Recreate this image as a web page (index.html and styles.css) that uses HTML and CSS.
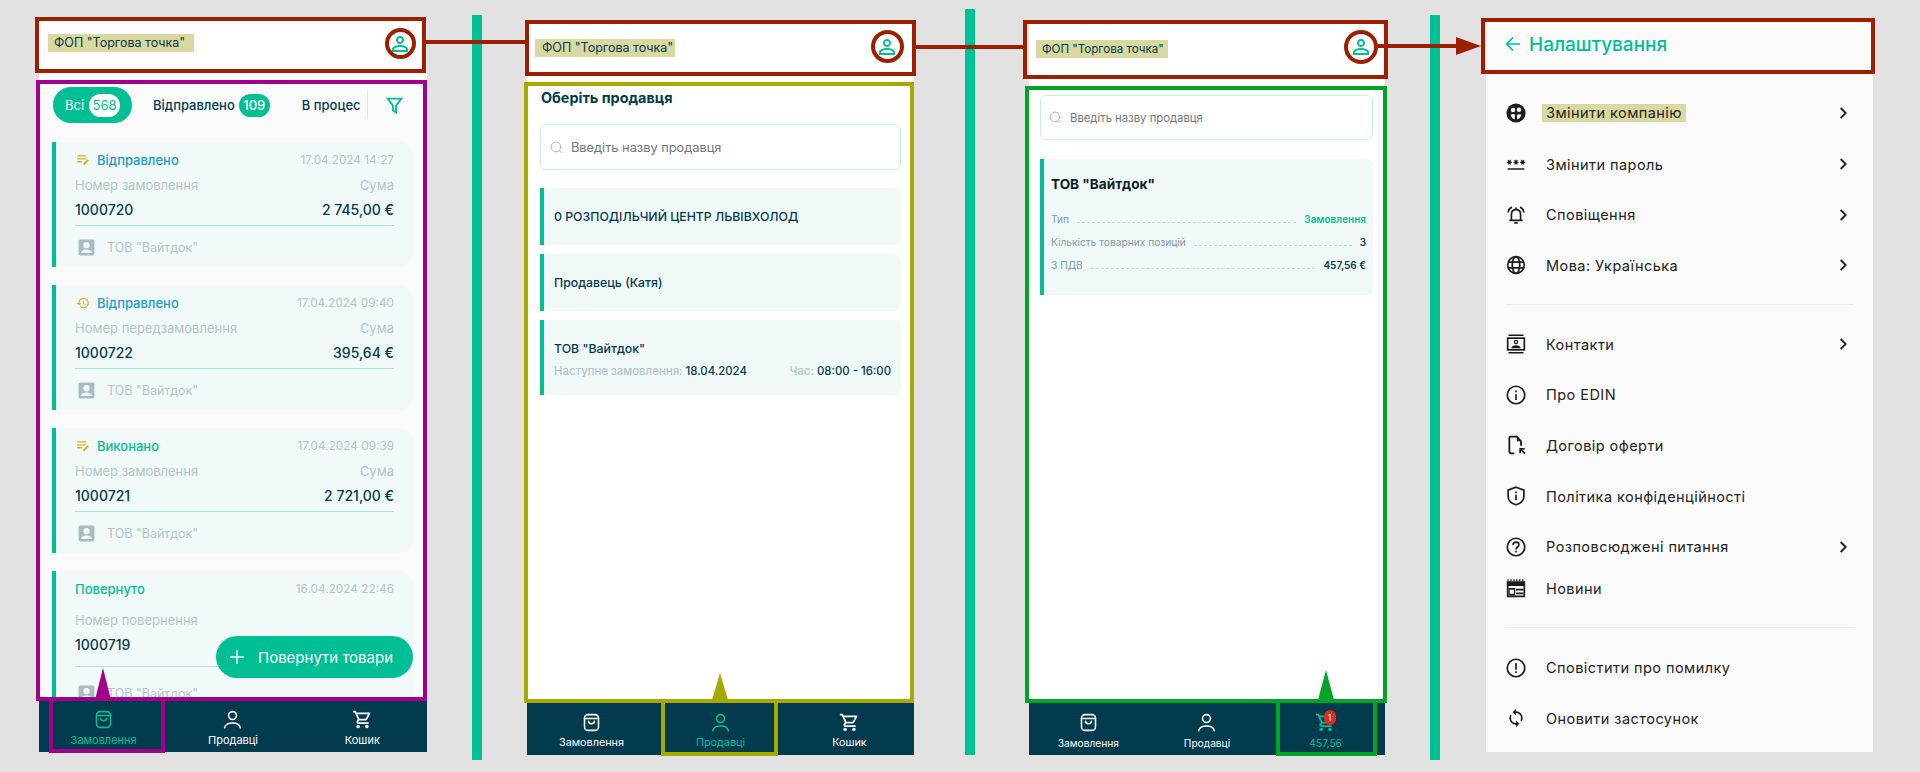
FILE: index.html
```html
<!DOCTYPE html>
<html lang="en">
<head>
    <meta charset="UTF-8">
    <meta name="viewport" content="width=device-width, initial-scale=1.0">
    <title>EDIN screens</title>
    <link rel="stylesheet" href="styles.css">
</head>
<body>
    <svg class="sprite" width="0" height="0">
        <symbol id="i-user" viewBox="0 0 24 24"><path d="M12 5.9a2.1 2.1 0 1 1 0 4.2 2.1 2.1 0 0 1 0-4.2m0 9c2.97 0 6.1 1.46 6.1 2.1v1.1H5.9V17c0-.64 3.13-2.1 6.1-2.1M12 4C9.79 4 8 5.79 8 8s1.79 4 4 4 4-1.79 4-4-1.79-4-4-4zm0 9c-2.67 0-8 1.34-8 4v3h16v-3c0-2.66-5.33-4-8-4z" fill="currentColor"/></symbol>
        <symbol id="i-bag" viewBox="0 0 24 24"><g fill="none" stroke="currentColor" stroke-width="1.8"><rect x="4" y="3" width="16" height="18" rx="4"/><path d="M4 7.5h16M8.5 10.5c.5 4 6.5 4 7 0" stroke-linecap="round"/></g></symbol>
        <symbol id="i-person" viewBox="0 0 24 24"><g fill="none" stroke="currentColor" stroke-width="1.8" stroke-linecap="round"><circle cx="12" cy="7.5" r="4.5"/><path d="M3 21.5c1-4 4.5-5.5 9-5.5s8 1.500 9 5.500"/></g></symbol>
        <symbol id="i-cart" viewBox="0 0 24 24"><path d="M15.55 13c.75 0 1.41-.41 1.75-1.03l3.58-6.49A.996.996 0 0 0 20.01 4H5.21l-.94-2H1v2h2l3.6 7.59-1.35 2.44C4.52 15.37 5.48 17 7 17h12v-2H7l1.1-2h7.45zM6.16 6h12.15l-2.76 5H8.53L6.16 6zM7 18c-1.1 0-1.99.9-1.99 2S5.9 22 7 22s2-.9 2-2-.9-2-2-2zm10 0c-1.1 0-1.99.9-1.99 2s.89 2 1.99 2 2-.9 2-2-.9-2-2-2z" fill="currentColor"/></symbol>
        <symbol id="i-notes" viewBox="0 0 24 24"><g fill="none" stroke="currentColor" stroke-width="2.200"><path d="M2 5h15M2 10h15M2 15h8"/><path d="M13 20l8-8" stroke-width="3.400"/></g></symbol>
        <symbol id="i-history" viewBox="0 0 24 24"><path d="M13 3a9 9 0 0 0-9 9H1l3.890 3.890.07.140L9 12H6c0-3.870 3.130-7 7-7s7 3.130 7 7-3.130 7-7 7c-1.930 0-3.680-.79-4.940-2.060l-1.420 1.420A8.954 8.954 0 0 0 13 21a9 9 0 0 0 0-18zm-1 5v5l4.280 2.540.72-1.210-3.500-2.080V8H12z" fill="currentColor"/></symbol>
        <symbol id="i-account" viewBox="0 0 24 24"><rect x="2" y="2" width="20" height="20" rx="2" fill="currentColor"/><circle cx="12" cy="9" r="4" fill="#f2faf9"/><path d="M5 19c.5-3.500 4-4.500 7-4.500s6.500 1 7 4.500z" fill="#f2faf9"/></symbol>
        <symbol id="i-search" viewBox="0 0 24 24"><g fill="none" stroke="currentColor" stroke-width="1.800" stroke-linecap="round"><circle cx="11" cy="11" r="9"/><path d="M17.500 18l3.500 3.500"/></g></symbol>
        <symbol id="i-chevron" viewBox="0 0 24 24"><path d="M8.500 4.500l7.500 7.500-7.500 7.500" fill="none" stroke="currentColor" stroke-width="2.800"/></symbol>
        <symbol id="i-company" viewBox="0 0 24 24"><circle cx="12" cy="12" r="11.500" fill="currentColor"/><circle cx="8.500" cy="8.500" r="2.700" fill="#fafafa"/><circle cx="15.500" cy="8" r="2.700" fill="#fafafa"/><path d="M5.500 14c1.800-1 4-1 5.500 0l-.5 5.500C8 19 6 17 5.500 14zM13 14.500c1.500-1.200 3.800-1.200 5.500-.5-.5 2.500-2.500 5-5 5.500z" fill="#fafafa"/></symbol>
        <symbol id="i-password" viewBox="0 0 24 24"><path d="M2 17h20v2H2v-2zm1.150-4.050L4 11.470l.85 1.480 1.300-.75-.85-1.480H7v-1.500H5.300l.85-1.470L4.850 7 4 8.470 3.150 7l-1.300.75.85 1.470H1v1.500h1.700l-.85 1.480 1.300.75zm6.700-.75 1.300.75.85-1.480.85 1.480 1.300-.75-.85-1.480H15v-1.500h-1.700l.85-1.470-1.300-.75L12 8.470 11.150 7l-1.300.75.85 1.470H9v1.500h1.700l-.85 1.480zM23 9.220h-1.700l.85-1.470-1.300-.75L20 8.470 19.150 7l-1.300.75.85 1.470H17v1.500h1.700l-.85 1.480 1.300.75.85-1.480.85 1.480 1.300-.75-.85-1.480H23v-1.500z" fill="currentColor"/></symbol>
        <symbol id="i-bell" viewBox="0 0 24 24"><g fill="none" stroke="currentColor" stroke-width="2"><path d="M6.500 18v-6.500c0-3.500 2.200-6 5.500-6s5.500 2.500 5.500 6V18M4 18.500h16"/><path d="M7 2.500C4.500 4 2.800 6.500 2.500 9M17 2.500c2.500 1.500 4.200 4 4.500 6.500"/><path d="M10 21.500h4M12 3v2"/></g></symbol>
        <symbol id="i-globe" viewBox="0 0 24 24"><g fill="none" stroke="currentColor" stroke-width="2"><circle cx="12" cy="12" r="10"/><ellipse cx="12" cy="12" rx="4.500" ry="10"/><path d="M2.500 8.500h19M2.500 15.500h19"/></g></symbol>
        <symbol id="i-contacts" viewBox="0 0 24 24"><g fill="none" stroke="currentColor" stroke-width="2"><path d="M3 1.500h18M3 22.500h18"/><rect x="2" y="5" width="20" height="14"/></g><circle cx="12" cy="9.500" r="2" fill="none" stroke="currentColor" stroke-width="1.500"/><path d="M6.500 17c0-2.500 3-3.500 5.500-3.500s5.500 1 5.500 3.500z" fill="currentColor"/></symbol>
        <symbol id="i-info" viewBox="0 0 24 24"><circle cx="12" cy="12" r="10.500" fill="none" stroke="currentColor" stroke-width="2"/><path d="M11 11h2v7h-2zM11 6.500h2v2.200h-2z" fill="currentColor"/></symbol>
        <symbol id="i-doc" viewBox="0 0 24 24"><path d="M10 22H6.500C5 22 4 21 4 19.500V3.500C4 2.500 4.500 2 5.500 2H13l5 5.500V13" fill="none" stroke="currentColor" stroke-width="2.200"/><path d="M13 2v5.500h5z" fill="currentColor"/><path d="M16 15.500h6.500v2h-3l4 4-1.500 1.500-4-4v3h-2z" fill="currentColor"/></symbol>
        <symbol id="i-shield" viewBox="0 0 24 24"><path d="M12 1.500l9.500 3.500v7c0 5-3.500 9-9.500 10.500C6 21 2.500 17 2.500 12V5z" fill="none" stroke="currentColor" stroke-width="2"/><path d="M11 10.500h2v6.500h-2zM11 6.500h2v2.200h-2z" fill="currentColor"/></symbol>
        <symbol id="i-help" viewBox="0 0 24 24"><circle cx="12" cy="12" r="10.500" fill="none" stroke="currentColor" stroke-width="2"/><path d="M8.500 9.500c0-2 1.500-3.300 3.500-3.300s3.500 1.300 3.500 3c0 2.800-3.500 2.800-3.500 5.800" fill="none" stroke="currentColor" stroke-width="2"/><path d="M11 16.500h2v2.200h-2z" fill="currentColor"/></symbol>
        <symbol id="i-news" viewBox="0 0 24 24"><path d="M2 5h20v17H2z" fill="none" stroke="currentColor" stroke-width="2"/><path d="M2 5h20v4.500H2zM12 13h9v2h-9zM3 12h8v9H3zM12 17.500h9v2h-9z" fill="currentColor"/><path d="M2.500 1.500v2.500M6 1.500v2.500M9.500 1.500v2.500M13 1.500v2.500M16.500 1.500v2.500M20 1.500v2.500" stroke="currentColor" stroke-width="1.500"/><path d="M4.500 14h5v5h-5z" fill="#fafafa"/></symbol>
        <symbol id="i-alert" viewBox="0 0 24 24"><circle cx="12" cy="12" r="10.500" fill="none" stroke="currentColor" stroke-width="2"/><path d="M11 6h2v8h-2zM11 15.800h2V18h-2z" fill="currentColor"/></symbol>
        <symbol id="i-sync" viewBox="0 0 24 24"><path d="M12 4V1L8 5l4 4V6c3.310 0 6 2.690 6 6 0 1.010-.25 1.970-.7 2.800l1.460 1.460C19.540 15.030 20 13.570 20 12c0-4.420-3.580-8-8-8zm0 14c-3.310 0-6-2.690-6-6 0-1.010.25-1.970.7-2.800L5.240 7.740C4.460 8.970 4 10.430 4 12c0 4.420 3.580 8 8 8v3l4-4-4-4v3z" fill="currentColor"/></symbol>
    </svg>

    <div class="board">
        <!-- orders -->
        <section class="screen screen-orders">
            <header class="top-bar">
                <span class="company">ФОП "Торгова точка"</span>
                <svg class="avatar"><use href="#i-user"/></svg>
            </header>
            <div class="content orders">
                <div class="tabs">
                    <div class="tab-scroll">
                        <div class="tab tab-active">Всі <span class="count">568</span></div>
                        <div class="tab">Відправлено <span class="count count-green">109</span></div>
                        <div class="tab tab-last">В процес</div>
                    </div>
                    <span class="tab-sep"></span>
                    <svg class="filter" viewBox="0 0 16 16"><path d="M1.500 1.500h13L9.500 8v6.500l-3-2V8z" fill="none" stroke="currentColor" stroke-width="1.800"/></svg>
                </div>
                <div class="order-list">
                    <article class="order">
                        <div class="order-row order-head">
                            <span class="order-state blue"><svg class="state-icon"><use href="#i-notes"/></svg>Відправлено</span>
                            <span class="muted order-date">17.04.2024 14:27</span>
                        </div>
                        <div class="order-row order-label muted"><span>Номер замовлення</span><span>Сума</span></div>
                        <div class="order-row order-value"><span>1000720</span><span>2 745,00 €</span></div>
                        <div class="order-owner muted"><svg class="owner-icon"><use href="#i-account"/></svg>ТОВ "Вайтдок"</div>
                    </article>
                    <article class="order">
                        <div class="order-row order-head">
                            <span class="order-state blue"><svg class="state-icon"><use href="#i-history"/></svg>Відправлено</span>
                            <span class="muted order-date">17.04.2024 09:40</span>
                        </div>
                        <div class="order-row order-label muted"><span>Номер передзамовлення</span><span>Сума</span></div>
                        <div class="order-row order-value"><span>1000722</span><span>395,64 €</span></div>
                        <div class="order-owner muted"><svg class="owner-icon"><use href="#i-account"/></svg>ТОВ "Вайтдок"</div>
                    </article>
                    <article class="order">
                        <div class="order-row order-head">
                            <span class="order-state green"><svg class="state-icon"><use href="#i-notes"/></svg>Виконано</span>
                            <span class="muted order-date">17.04.2024 09:39</span>
                        </div>
                        <div class="order-row order-label muted"><span>Номер замовлення</span><span>Сума</span></div>
                        <div class="order-row order-value"><span>1000721</span><span>2 721,00 €</span></div>
                        <div class="order-owner muted"><svg class="owner-icon"><use href="#i-account"/></svg>ТОВ "Вайтдок"</div>
                    </article>
                    <article class="order order-return">
                        <div class="order-row order-head">
                            <span class="order-state green">Повернуто</span>
                            <span class="muted order-date">16.04.2024 22:46</span>
                        </div>
                        <div class="order-row order-label muted"><span>Номер повернення</span></div>
                        <div class="order-row order-value"><span>1000719</span></div>
                        <div class="order-owner muted"><svg class="owner-icon"><use href="#i-account"/></svg>ТОВ "Вайтдок"</div>
                    </article>
                </div>
                <button class="return-btn">
                    <svg viewBox="0 0 14 14"><path d="M7 0v14M0 7h14" stroke="currentColor" stroke-width="1.500"/></svg>
                    Повернути товари
                </button>
            </div>
            <nav class="tabbar">
                <div class="nav-item nav-active"><svg><use href="#i-bag"/></svg>Замовлення</div>
                <div class="nav-item"><svg><use href="#i-person"/></svg>Продавці</div>
                <div class="nav-item"><svg><use href="#i-cart"/></svg>Кошик</div>
            </nav>
        </section>

        <div class="divider divider-a"></div>

        <!-- sellers -->
        <section class="screen screen-sellers">
            <header class="top-bar">
                <span class="company">ФОП "Торгова точка"</span>
                <svg class="avatar"><use href="#i-user"/></svg>
            </header>
            <div class="content sellers">
                <h2 class="sellers-title">Оберіть продавця</h2>
                <div class="search">
                    <svg><use href="#i-search"/></svg>
                    <span>Введіть назву продавця</span>
                </div>
                <div class="seller-list">
                    <div class="seller">0 РОЗПОДІЛЬЧИЙ ЦЕНТР ЛЬВІВХОЛОД</div>
                    <div class="seller">Продавець (Катя)</div>
                    <div class="seller seller-next">
                        <div>ТОВ "Вайтдок"</div>
                        <div class="seller-meta">
                            <span><span class="muted">Наступне замовлення:</span> 18.04.2024</span>
                            <span><span class="muted">Час:</span> 08:00 - 16:00</span>
                        </div>
                    </div>
                </div>
            </div>
            <nav class="tabbar">
                <div class="nav-item"><svg><use href="#i-bag"/></svg>Замовлення</div>
                <div class="nav-item nav-active"><svg><use href="#i-person"/></svg>Продавці</div>
                <div class="nav-item"><svg><use href="#i-cart"/></svg>Кошик</div>
            </nav>
        </section>

        <div class="divider divider-b"></div>

        <!-- cart -->
        <section class="screen screen-cart">
            <header class="top-bar">
                <span class="company">ФОП "Торгова точка"</span>
                <svg class="avatar"><use href="#i-user"/></svg>
            </header>
            <div class="content cart">
                <div class="search">
                    <svg><use href="#i-search"/></svg>
                    <span>Введіть назву продавця</span>
                </div>
                <div class="cart-card">
                    <div class="cart-title">ТОВ "Вайтдок"</div>
                    <div class="cart-row"><span>Тип</span><i></i><b class="green">Замовлення</b></div>
                    <div class="cart-row"><span>Кількість товарних позицій</span><i></i><b>3</b></div>
                    <div class="cart-row"><span>З ПДВ</span><i></i><b>457,56 €</b></div>
                </div>
            </div>
            <nav class="tabbar">
                <div class="nav-item"><svg><use href="#i-bag"/></svg>Замовлення</div>
                <div class="nav-item"><svg><use href="#i-person"/></svg>Продавці</div>
                <div class="nav-item nav-active">
                    <svg><use href="#i-cart"/></svg>457,56
                    <span class="nav-badge">1</span>
                </div>
            </nav>
        </section>

        <div class="divider divider-a"></div>

        <!-- settings -->
        <section class="screen screen-settings">
            <header class="settings-head">
                <svg viewBox="0 0 16 16"><path d="M15 8H2M8 1.500L1.500 8 8 14.500" fill="none" stroke="currentColor" stroke-width="1.600"/></svg>
                Налаштування
            </header>
            <ul class="menu menu-first">
                <li><svg class="menu-icon"><use href="#i-company"/></svg><span class="mark-text">Змінити компанію</span><svg class="chevron"><use href="#i-chevron"/></svg></li>
                <li><svg class="menu-icon"><use href="#i-password"/></svg><span>Змінити пароль</span><svg class="chevron"><use href="#i-chevron"/></svg></li>
                <li><svg class="menu-icon"><use href="#i-bell"/></svg><span>Сповіщення</span><svg class="chevron"><use href="#i-chevron"/></svg></li>
                <li><svg class="menu-icon"><use href="#i-globe"/></svg><span>Мова: Українська</span><svg class="chevron"><use href="#i-chevron"/></svg></li>
            </ul>
            <hr class="menu-line">
            <ul class="menu">
                <li><svg class="menu-icon"><use href="#i-contacts"/></svg><span>Контакти</span><svg class="chevron"><use href="#i-chevron"/></svg></li>
                <li><svg class="menu-icon"><use href="#i-info"/></svg><span>Про EDIN</span></li>
                <li><svg class="menu-icon"><use href="#i-doc"/></svg><span>Договір оферти</span></li>
                <li><svg class="menu-icon"><use href="#i-shield"/></svg><span>Політика конфіденційності</span></li>
                <li><svg class="menu-icon"><use href="#i-help"/></svg><span>Розповсюджені питання</span><svg class="chevron"><use href="#i-chevron"/></svg></li>
                <li class="menu-short"><svg class="menu-icon"><use href="#i-news"/></svg><span>Новини</span></li>
            </ul>
            <hr class="menu-line menu-line-low">
            <ul class="menu">
                <li><svg class="menu-icon"><use href="#i-alert"/></svg><span>Сповістити про помилку</span></li>
                <li><svg class="menu-icon"><use href="#i-sync"/></svg><span>Оновити застосунок</span></li>
            </ul>
        </section>

        <!-- red, purple, olive and green callouts drawn over the screens -->
        <svg class="callouts" viewBox="0 0 1920 772">
            <g class="c-red">
                <rect x="37" y="19" width="387" height="52"/>
                <circle cx="400.500" cy="43.500" r="13.500"/>
                <path d="M426 42h99"/>
                <rect x="527" y="22" width="387" height="52"/>
                <circle cx="887.500" cy="46.500" r="14.500"/>
                <path d="M916 47h107"/>
                <rect x="1025" y="22" width="361" height="55"/>
                <circle cx="1361" cy="47" r="15"/>
                <path d="M1378 46h80"/>
                <polygon points="1456,37 1481,46 1456,55"/>
                <rect x="1483" y="20" width="390" height="52"/>
            </g>
            <g class="c-purple">
                <rect x="38" y="82" width="387" height="617"/>
                <rect x="51" y="699" width="112" height="52"/>
                <polygon points="103,668 95,700 111,700"/>
            </g>
            <g class="c-olive">
                <rect x="526" y="84" width="386" height="617"/>
                <rect x="663" y="701" width="113" height="53"/>
                <polygon points="720,673 712,700 728,700"/>
            </g>
            <g class="c-green">
                <rect x="1027" y="88" width="358" height="613"/>
                <rect x="1278" y="701" width="97" height="53"/>
                <polygon points="1326,670 1318,700 1334,700"/>
            </g>
        </svg>
    </div>
</body>
</html>
```

FILE: styles.css
```css
html, body {
    margin: 0;
    padding: 0;
    background: #e2e2e2;
    font-family: Inter, "Noto Sans", sans-serif;
    color: #023a4e;
}

.sprite {
    position: absolute;
}

.board {
    position: relative;
    display: flex;
    align-items: flex-start;
    width: 1920px;
    height: 772px;
    padding-left: 39px;
    box-sizing: border-box;
    overflow: hidden;
}

.callouts {
    position: absolute;
    left: 0;
    top: 0;
    width: 1920px;
    height: 772px;
    pointer-events: none;
}

.callouts rect, .callouts circle, .callouts path {
    fill: none;
    stroke-width: 4;
}

.c-red rect, .c-red circle, .c-red path { stroke: #9c1f00; }
.c-red polygon { fill: #9c1f00; }
.c-purple rect { stroke: #a0008c; }
.c-purple polygon { fill: #a0008c; }
.c-olive rect { stroke: #a8a800; }
.c-olive polygon { fill: #a8a800; }
.c-green rect { stroke: #00a528; }
.c-green polygon { fill: #00a528; }

.divider {
    flex: none;
    width: 10px;
    background: #00c095;
}

.divider-a {
    height: 745px;
    margin: 15px 45px 0 45px;
}

.divider-b {
    height: 746px;
    margin: 9px 54px 0 51px;
}

.screen {
    flex: none;
    display: flex;
    flex-direction: column;
    height: 731px;
    background: #fff;
}

.screen-orders { width: 388px; margin-top: 21px; }
.screen-sellers { width: 387px; margin-top: 24px; }
.screen-cart { width: 356px; margin-top: 24px; }
.screen-settings { width: 387px; height: 730px; margin-top: 22px; margin-left: 1px; background: #fafafa; }

.top-bar {
    flex: none;
    display: flex;
    align-items: center;
    justify-content: space-between;
    height: 48px;
    padding: 0 15px 0 9px;
    background: #fff;
}

.company {
    padding: 1px 9px 1px 6px;
    margin-top: -4px;
    background: #d9d8a0;
    font-size: 12.500px;
    line-height: 16px;
    color: #023a4e;
}

.avatar {
    width: 24px;
    height: 24px;
    margin-top: -3px;
    color: #00bf95;
}

.screen-sellers .top-bar {
    padding-left: 8px;
}

.screen-sellers .company {
    padding: 1px 2px 1px 7px;
    margin-top: 0;
}

.screen-cart .top-bar {
    height: 51px;
    padding: 0 12px 0 7px;
}

.screen-cart .company {
    padding: 1px 4px 1px 6px;
    margin-top: -1px;
    font-size: 11.600px;
}

.screen-cart .avatar {
    margin-top: -5px;
}

.content {
    position: relative;
    flex: 1;
    min-height: 0;
    overflow: hidden;
}

/* orders */
.orders {
    padding: 18px 14px 0 13px;
    background: #fafafa;
}

.tabs {
    display: flex;
    align-items: center;
    height: 36px;
}

.tab-scroll {
    display: flex;
    align-items: center;
    width: 314px;
    height: 36px;
    margin-left: 1px;
    overflow: hidden;
}

.tab {
    flex: none;
    display: flex;
    align-items: center;
    gap: 4px;
    font-size: 13px;
    font-weight: 500;
    margin-right: 32px;
}

.tab-active {
    gap: 5px;
    height: 36px;
    width: 79px;
    box-sizing: border-box;
    padding-left: 12px;
    margin-right: 21px;
    border-radius: 18px;
    background: #00bf95;
    color: #fff;
    font-weight: 400;
}

.tab-sep {
    width: 1px;
    height: 28px;
    background: #d5ece7;
}

.count {
    display: block;
    width: 31px;
    line-height: 23px;
    border-radius: 12px;
    background: #fff;
    color: #00bf95;
    text-align: center;
    font-size: 13px;
}

.count-green {
    background: #00bf95;
    color: #fff;
}

.tab-last {
    margin-right: 0;
}

.filter {
    width: 17px;
    height: 17px;
    margin-left: 18px;
    color: #00bf95;
}

.order-list {
    display: flex;
    flex-direction: column;
    gap: 18px;
    margin-top: 19px;
}

.order {
    flex: none;
    box-sizing: border-box;
    height: 125px;
    padding: 9px 19px 0 19px;
    border-left: 4px solid #00bf95;
    border-radius: 0 14px 14px 0;
    background: #f2faf9;
}

.order-row {
    display: flex;
    align-items: center;
    justify-content: space-between;
    height: 18px;
    font-size: 13px;
}

.muted {
    color: #b2c4c9;
}

.blue { color: #1a9cc4; }
.green { color: #00bf95; }

.order-date {
    font-size: 11.800px;
}

.order-state {
    display: flex;
    align-items: center;
    font-weight: 500;
}

.state-icon {
    width: 14px;
    height: 14px;
    margin: 0 7px 0 1px;
    color: #e0a91c;
}

.order-label {
    margin-top: 7px;
}

.order-value {
    margin-top: 6px;
    padding-bottom: 7px;
    border-bottom: 1px solid #a8e5d6;
    font-size: 14px;
    font-weight: 500;
}

.order-owner {
    display: flex;
    align-items: center;
    height: 18px;
    margin-top: 12px;
    font-size: 12.500px;
}

.owner-icon {
    width: 19px;
    height: 19px;
    margin: 0 11px 0 2px;
    color: #a9bcc2;
}

.order-return .order-label { margin-top: 13px; }
.order-return .order-value { padding-bottom: 13px; }
.order-return .order-owner { margin-top: 17px; }
.order-return { height: 140px; }

.return-btn {
    position: absolute;
    right: 14px;
    bottom: 22px;
    display: flex;
    align-items: center;
    gap: 14px;
    width: 197px;
    height: 42px;
    padding: 0 0 0 14px;
    border: 0;
    border-radius: 21px;
    background: #00bf95;
    color: #fff;
    font-family: inherit;
    font-size: 15px;
}

.return-btn svg {
    width: 14px;
    height: 14px;
}

/* bottom bar */
.tabbar {
    flex: none;
    display: grid;
    grid-template-columns: repeat(3, 1fr);
    height: 52px;
    background: #023a4e;
}

.nav-item {
    position: relative;
    display: flex;
    flex-direction: column;
    align-items: center;
    padding-top: 9px;
    color: #fff;
    font-size: 11px;
    line-height: 14px;
}

.nav-item svg {
    width: 21px;
    height: 21px;
    margin-bottom: 3px;
}

.nav-active {
    color: #00bf95;
}

.screen-sellers .nav-item {
    font-size: 10.800px;
}

.screen-cart .nav-item {
    font-size: 10.200px;
}

.nav-badge {
    position: absolute;
    left: 50%;
    top: 7px;
    width: 12px;
    height: 15px;
    margin-left: -2px;
    border-radius: 7px;
    background: #dc2b2b;
    color: #fff;
    font-size: 9px;
    line-height: 15px;
    text-align: center;
}

/* sellers */
.sellers {
    padding: 16px 13px 0 13px;
}

.sellers-title {
    margin: 0 0 16px 1px;
    font-size: 14.400px;
    font-weight: 700;
    line-height: 20px;
}

.search {
    display: flex;
    align-items: center;
    box-sizing: border-box;
    height: 46px;
    padding-left: 9px;
    border: 1px solid #c7efe6;
    border-radius: 6px;
    color: #70777a;
    font-size: 12.800px;
}

.search svg {
    width: 13px;
    height: 13px;
    margin-right: 8px;
    color: #a4b1cc;
}

.seller-list {
    display: flex;
    flex-direction: column;
    gap: 9px;
    margin-top: 18px;
}

.seller {
    display: flex;
    align-items: center;
    box-sizing: border-box;
    height: 57px;
    padding: 0 10px;
    border-left: 4px solid #00bf95;
    border-radius: 0 8px 8px 0;
    background: #f1f9f8;
    font-size: 12.300px;
    font-weight: 500;
}

.seller-next {
    flex-direction: column;
    align-items: stretch;
    justify-content: center;
    gap: 8px;
    height: 75px;
    padding-top: 3px;
}

.seller-meta {
    display: flex;
    justify-content: space-between;
    font-size: 11.400px;
}

/* cart */
.cart {
    padding: 20px 12px 0 11px;
}

.cart .search {
    height: 45px;
    padding-left: 8px;
    font-size: 11.300px;
}

.cart-card {
    box-sizing: border-box;
    height: 136px;
    margin-top: 19px;
    padding: 16px 7px 0 7px;
    border-left: 4px solid #00bf95;
    border-radius: 0 6px 6px 0;
    background: #f1f9f8;
}

.cart-title {
    margin-bottom: 14px;
    color: #0b1c21;
    font-size: 13.600px;
    font-weight: 700;
    line-height: 18px;
}

.cart-row {
    display: flex;
    align-items: center;
    height: 23px;
    font-size: 10.200px;
    color: #7d9aa3;
}

.cart-row i {
    flex: 1;
    height: 8px;
    margin: 0 8px;
    border-bottom: 1px dashed #b9dcd6;
}

.cart-row b {
    color: #023a4e;
    font-size: 10px;
    font-weight: 600;
}

.cart-row b.green {
    color: #00bf95;
}

/* settings */
.settings-head {
    flex: none;
    display: flex;
    align-items: center;
    gap: 8px;
    height: 44px;
    padding-left: 19px;
    color: #00bf95;
    font-size: 19px;
    font-weight: 500;
}

.settings-head svg {
    width: 16px;
    height: 16px;
}

.menu {
    margin: 0;
    padding: 0;
    list-style: none;
}

.menu-first {
    margin-top: 22px;
}

.menu li {
    display: flex;
    align-items: center;
    height: 50.700px;
    padding: 0 22px 0 18px;
    color: #222;
    font-size: 14.500px;
    letter-spacing: .45px;
}

.menu li.menu-short {
    height: 32px;
}

.menu-icon {
    flex: none;
    width: 20px;
    height: 20px;
    margin: 0 20px 0 2px;
    color: #1c1c1c;
}

.chevron {
    width: 16px;
    height: 16px;
    margin-left: auto;
    color: #222;
}

.mark-text {
    margin-left: -4px;
    padding: 0 4px;
    background: #d9d8a0;
    line-height: 18px;
}

.menu-line {
    height: 1px;
    margin: 13px 19px 14px 19px;
    border: 0;
    background: #e6eeec;
}

.menu-line-low {
    margin: 23px 19px 14px 19px;
}
```
